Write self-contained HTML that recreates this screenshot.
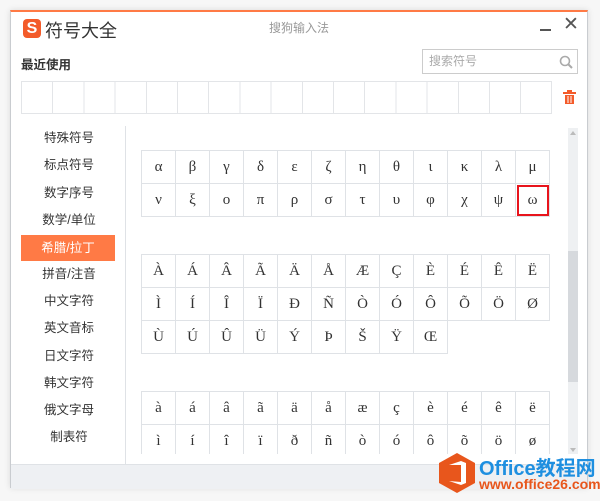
<html><head><style>
body{margin:0;width:600px;height:501px;background:#f7f7f7;font-family:"Liberation Sans","Noto Sans CJK SC",sans-serif;position:relative;overflow:hidden}
.win{position:absolute;left:10px;top:10px;width:578px;height:478px;background:#fff;border:1px solid #c9ccd0;border-top:2px solid #ff7a45;box-sizing:border-box;box-shadow:0 0 6px rgba(0,0,0,.12)}
.a{position:absolute}
.grid{position:absolute;border-collapse:collapse;font-family:"Liberation Serif","DejaVu Serif",serif;font-size:15px;color:#333}
.grid td{width:33px;height:33px;border:1px solid #dfe2e6;text-align:center;padding:0}
.side div{position:absolute;left:11px;width:94px;height:18px;line-height:18px;text-align:center;font-size:12.5px;color:#333}
</style></head><body>
<div class="win">
<div class="a" style="left:12px;top:7px;width:18px;height:19px;background:#f35b2a;border-radius:4px;color:#fff;font-weight:bold;font-size:16px;line-height:19px;text-align:center">S</div>
<div class="a" style="left:34px;top:5px;font-size:18px;color:#333">符号大全</div>
<div class="a" style="left:258px;top:7px;font-size:12px;color:#999">搜狗输入法</div>
<div class="a" style="left:529px;top:17px;width:11px;height:2px;background:#555"></div>
<div class="a" style="left:552px;top:1px;font-size:19px;color:#555">✕</div>
<div class="a" style="left:10px;top:42px;font-size:12.5px;font-weight:bold;color:#333">最近使用</div>
<div class="a" style="left:411px;top:37px;width:156px;height:25px;border:1px solid #ccc;box-sizing:border-box;font-size:12px;color:#aaa;line-height:23px;padding-left:6px">搜索符号
<svg style="position:absolute;right:4px;top:5px" width="14" height="14"><circle cx="6" cy="6" r="4.5" fill="none" stroke="#aaa" stroke-width="1.6"/><line x1="9.5" y1="9.5" x2="13" y2="13" stroke="#aaa" stroke-width="2"/></svg></div>
<div class="a" style="left:10px;top:69px;width:531px;height:33px;border:1px solid #e3e5e8;box-sizing:border-box;background:repeating-linear-gradient(90deg,transparent 0 30.2px,#e3e5e8 30.2px 31.2px)"></div>
<svg class="a" style="left:552px;top:78px" width="13" height="15"><rect x="0" y="2" width="13" height="2" fill="#f35b2a"/><rect x="4" y="0" width="5" height="2" fill="#f35b2a"/><path d="M2 5h9v9H2z" fill="#f35b2a"/><path d="M5 6v7M8 6v7" stroke="#fff" stroke-width="1"/></svg>
<div class="a" style="left:114px;top:114px;width:1px;height:339px;background:#dfe2e6"></div>
<div class="side">
<div style="top:117px">特殊符号</div><div style="top:144px">标点符号</div><div style="top:172px">数字序号</div><div style="top:199px">数学/单位</div>
<div style="top:223px;height:26px;line-height:26px;background:#ff7a45;color:#fff;left:10px">希腊/拉丁</div>
<div style="top:253px">拼音/注音</div><div style="top:280px">中文字符</div><div style="top:307px">英文音标</div><div style="top:335px">日文字符</div><div style="top:362px">韩文字符</div><div style="top:389px">俄文字母</div><div style="top:416px">制表符</div>
</div>
<div class="a" style="left:116px;top:114px;width:440px;height:328px;overflow:hidden">
<table class="grid" style="left:14px;top:24px"><tr><td>α</td><td>β</td><td>γ</td><td>δ</td><td>ε</td><td>ζ</td><td>η</td><td>θ</td><td>ι</td><td>κ</td><td>λ</td><td>μ</td></tr>
<tr><td>ν</td><td>ξ</td><td>ο</td><td>π</td><td>ρ</td><td>σ</td><td>τ</td><td>υ</td><td>φ</td><td>χ</td><td>ψ</td><td style="outline:2px solid #e8141c;outline-offset:-3px">ω</td></tr></table>
<table class="grid" style="left:14px;top:128px"><tr><td>À</td><td>Á</td><td>Â</td><td>Ã</td><td>Ä</td><td>Å</td><td>Æ</td><td>Ç</td><td>È</td><td>É</td><td>Ê</td><td>Ë</td></tr>
<tr><td>Ì</td><td>Í</td><td>Î</td><td>Ï</td><td>Ð</td><td>Ñ</td><td>Ò</td><td>Ó</td><td>Ô</td><td>Õ</td><td>Ö</td><td>Ø</td></tr>
<tr><td>Ù</td><td>Ú</td><td>Û</td><td>Ü</td><td>Ý</td><td>Þ</td><td>Š</td><td>Ÿ</td><td>Œ</td></tr></table>
<table class="grid" style="left:14px;top:265px"><tr><td>à</td><td>á</td><td>â</td><td>ã</td><td>ä</td><td>å</td><td>æ</td><td>ç</td><td>è</td><td>é</td><td>ê</td><td>ë</td></tr>
<tr><td>ì</td><td>í</td><td>î</td><td>ï</td><td>ð</td><td>ñ</td><td>ò</td><td>ó</td><td>ô</td><td>õ</td><td>ö</td><td>ø</td></tr></table>
</div>
<div class="a" style="left:557px;top:116px;width:10px;height:326px;background:#eef0f2"></div>
<div class="a" style="left:557px;top:239px;width:10px;height:131px;background:#d6d9dd"></div>
<div class="a" style="left:559px;top:119px;border:3px solid transparent;border-bottom:4px solid #bbb;border-top:0"></div>
<div class="a" style="left:559px;top:436px;border:3px solid transparent;border-top:4px solid #bbb;border-bottom:0"></div>
<div class="a" style="left:0;top:452px;width:576px;height:24px;background:#eef0f3;border-top:1px solid #dfe2e6"></div>
</div>
<svg class="a" style="left:437px;top:452px" width="40" height="42"><polygon points="20,1 38,11 38,31 20,41 2,31 2,11" fill="#e8561c"/><path d="M12 13l12-4 5 2v20l-5 2-12-4 12 1V13z" fill="#fff"/></svg>
<div class="a" style="left:479px;top:452px;font-size:20px;font-weight:bold;color:#1e8fe0">Office教程网</div>
<div class="a" style="left:479px;top:476px;font-size:14px;font-weight:bold;color:#e8561c">www.office26.com</div>
</body></html>
